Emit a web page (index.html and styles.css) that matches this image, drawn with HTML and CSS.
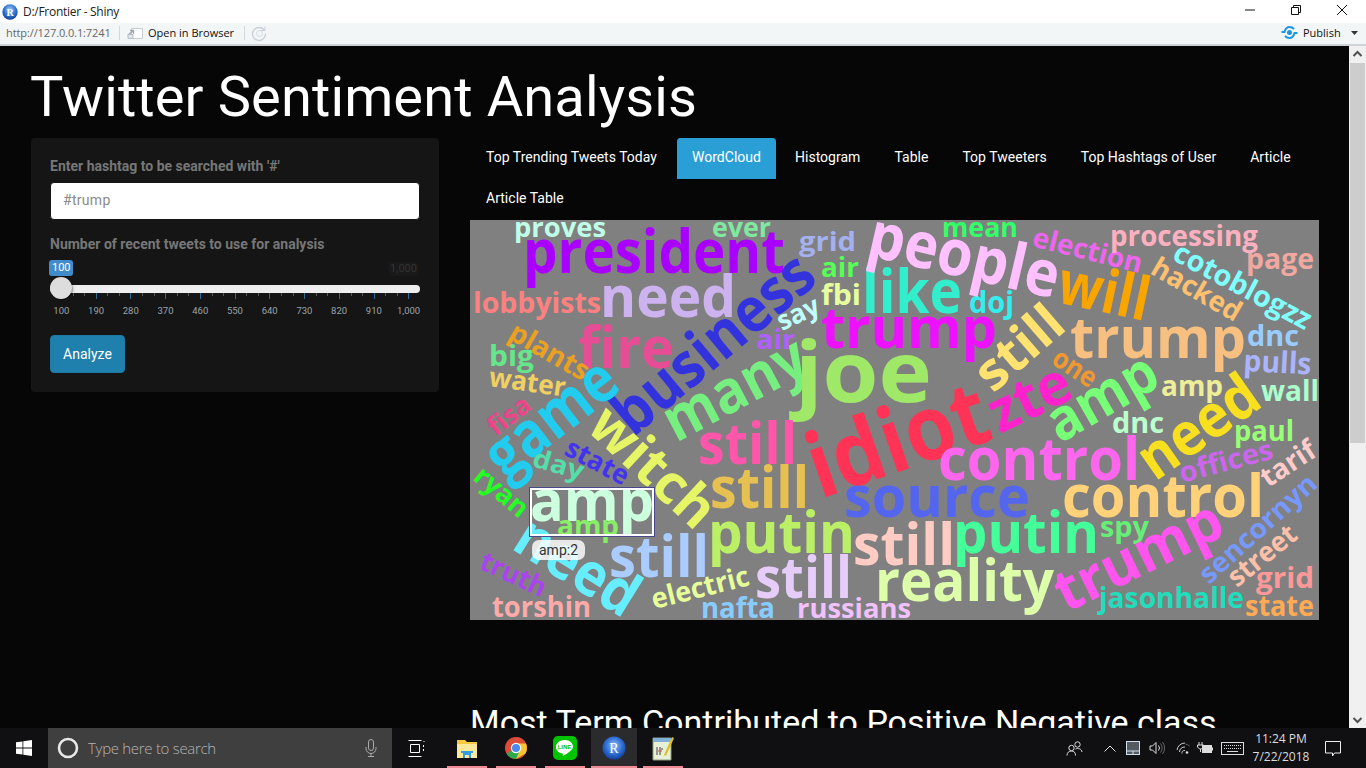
FILE: index.html
```html
<!DOCTYPE html>
<html lang="en">
<head>
<meta charset="utf-8">
<title>D:/Frontier - Shiny</title>
<link rel="stylesheet" href="styles.css">
</head>
<body>
<div class="window">
  <header class="titlebar">
    <svg class="r-logo" width="16" height="16" viewBox="0 0 16 16"><defs><radialGradient id="rg" cx="50%" cy="35%" r="65%"><stop offset="0" stop-color="#9cc8f5"/><stop offset="0.6" stop-color="#2f73cf"/><stop offset="1" stop-color="#123f96"/></radialGradient></defs><circle cx="8" cy="8" r="7.7" fill="url(#rg)"/><text x="8" y="11.6" text-anchor="middle" class="r-letter">R</text></svg>
    <span class="title-text">D:/Frontier - Shiny</span>
    <div class="winbtns">
      <span class="winbtn"><svg width="12" height="12" viewBox="0 0 12 12"><path d="M1 6h10" stroke="#111" fill="none"/></svg></span>
      <span class="winbtn"><svg width="12" height="12" viewBox="0 0 12 12"><path d="M1.5 3.5h7v7h-7zM3.5 3.5v-2h7v7h-2" stroke="#111" fill="none"/></svg></span>
      <span class="winbtn"><svg width="12" height="12" viewBox="0 0 12 12"><path d="M1 1l10 10M11 1L1 11" stroke="#111" fill="none"/></svg></span>
    </div>
  </header>
  <div class="toolbar">
    <span class="url">http://127.0.0.1:7241</span>
    <span class="sep"></span>
    <svg class="open-ico" width="16" height="12" viewBox="0 0 16 12"><path d="M4.500 1.500h11v10h-11z" fill="#fff" stroke="#c5ccd2"/><path d="M1 8l5-4M3 3.500h3.500V7" stroke="#9aa6b0" fill="none" stroke-width="1.300"/><path d="M1 7.500h5v4H1z" fill="#dfe5ea" stroke="#b5bec6"/></svg>
    <span class="open-text">Open in Browser</span>
    <span class="sep"></span>
    <svg class="reload-ico" width="16" height="16" viewBox="0 0 16 16"><path d="M13.500 5.500A6.500 6.500 0 1 0 14.500 8.500" stroke="#c6d0d8" stroke-width="1.300" fill="none"/><path d="M8.500 5.500h5.500V1.500" stroke="#c6d0d8" fill="none"/><circle cx="8.500" cy="8.500" r="3" stroke="#d5dde3" fill="none"/></svg>
    <span class="spacer"></span>
    <svg class="pub-ico" width="17" height="13" viewBox="0 0 17 13"><path d="M0.500 6h3c1-4 3-5 5-5s3.500 0.800 4.500 2" stroke="#1d97e4" stroke-width="2" fill="none"/><path d="M16.500 7h-3c-1 4-3 5-5 5s-3.500-0.800-4.500-2" stroke="#1d97e4" stroke-width="2" fill="none"/><circle cx="8.500" cy="6.500" r="2.500" fill="#1d97e4"/></svg>
    <span class="pub-text">Publish</span>
    <svg class="pub-caret" width="7" height="4" viewBox="0 0 7 4"><path d="M0 0h7L3.500 4z" fill="#333"/></svg>
  </div>
  <div class="viewport">
    <main class="page">
      <h1 class="page-title">Twitter Sentiment Analysis</h1>
      <div class="columns">
        <aside class="sidebar">
          <label class="field-label">Enter hashtag to be searched with '#'</label>
          <input class="text-input" type="text" placeholder="#trump">
          <label class="field-label">Number of recent tweets to use for analysis</label>
          <div class="slider">
            <div class="bubbles"><span class="bubble-from">100</span><span class="bubble-max">1,000</span></div>
            <div class="track"><span class="thumb"></span></div>
            <div class="ticks"></div>
            <div class="tick-labels"><span>100</span><span>190</span><span>280</span><span>370</span><span>460</span><span>550</span><span>640</span><span>730</span><span>820</span><span>910</span><span>1,000</span></div>
          </div>
          <button class="analyze" type="button">Analyze</button>
        </aside>
        <section class="results">
          <ul class="tabs">
            <li class="tab tab-first">Top Trending Tweets Today</li>
            <li class="tab tab-active">WordCloud</li>
            <li class="tab">Histogram</li>
            <li class="tab">Table</li>
            <li class="tab">Top Tweeters</li>
            <li class="tab">Top Hashtags of User</li>
            <li class="tab">Article</li>
            <li class="tab">Article Table</li>
          </ul>
          <div class="cloud-wrap">
            <svg class="cloud" width="849" height="400" viewBox="470 219 849 400">
              <rect x="470" y="219" width="849" height="400" fill="#808080"/>
              <text x="514" y="236" font-size="26" textLength="92" lengthAdjust="spacingAndGlyphs" fill="#bfffe8">proves</text>
              <text x="712" y="236" font-size="26" textLength="59" lengthAdjust="spacingAndGlyphs" fill="#80e8a0">ever</text>
              <text x="523" y="272" font-size="60" textLength="262" lengthAdjust="spacingAndGlyphs" fill="#aa00ff">president</text>
              <text x="799" y="250" font-size="27" textLength="57" lengthAdjust="spacingAndGlyphs" fill="#a5b0ee">grid</text>
              <text x="821" y="276" font-size="26" textLength="38" lengthAdjust="spacingAndGlyphs" fill="#55ff55">air</text>
              <text x="821" y="304" font-size="29" textLength="40" lengthAdjust="spacingAndGlyphs" fill="#e8ffa0">fbi</text>
              <text x="473" y="312" font-size="28" textLength="128" lengthAdjust="spacingAndGlyphs" fill="#ff8080">lobbyists</text>
              <text x="600" y="316" font-size="58" textLength="136" lengthAdjust="spacingAndGlyphs" fill="#ccb3f0">need</text>
              <text x="578" y="367" font-size="58" textLength="96" lengthAdjust="spacingAndGlyphs" fill="#e64d95">fire</text>
              <text x="489" y="365" font-size="29" textLength="45" lengthAdjust="spacingAndGlyphs" fill="#66e68a">big</text>
              <text x="488" y="385" font-size="27" textLength="77" lengthAdjust="spacingAndGlyphs" fill="#f0d060" transform="rotate(8 488 385)">water</text>
              <text x="507" y="337" font-size="28" textLength="87" lengthAdjust="spacingAndGlyphs" fill="#eba020" transform="rotate(30 507 337)">plants</text>
              <text x="633" y="437" font-size="62" textLength="244" lengthAdjust="spacingAndGlyphs" fill="#3333dd" transform="rotate(-40 633 437)">business</text>
              <text x="782" y="330" font-size="27" textLength="44" lengthAdjust="spacingAndGlyphs" fill="#bfffff" transform="rotate(-25 782 330)">say</text>
              <text x="756" y="348" font-size="26" textLength="39" lengthAdjust="spacingAndGlyphs" fill="#b060ff">air</text>
              <text x="676" y="442" font-size="60" textLength="154" lengthAdjust="spacingAndGlyphs" fill="#77ee80" transform="rotate(-28 676 442)">many</text>
              <text x="795" y="401" font-size="85" textLength="137" lengthAdjust="spacingAndGlyphs" fill="#a0e868">joe</text>
              <text x="821" y="347" font-size="57" textLength="176" lengthAdjust="spacingAndGlyphs" fill="#ee11ff">trump</text>
              <text x="862" y="312" font-size="60" textLength="100" lengthAdjust="spacingAndGlyphs" fill="#33eecc">like</text>
              <text x="969" y="312" font-size="30" textLength="45" lengthAdjust="spacingAndGlyphs" fill="#33eeee">doj</text>
              <text x="865" y="254" font-size="64" textLength="194" lengthAdjust="spacingAndGlyphs" fill="#ffc0ff" transform="rotate(13 865 254)">people</text>
              <text x="942" y="236" font-size="27" textLength="76" lengthAdjust="spacingAndGlyphs" fill="#33ff66">mean</text>
              <text x="1031" y="245" font-size="28" textLength="112" lengthAdjust="spacingAndGlyphs" fill="#ee66ee" transform="rotate(14 1031 245)">election</text>
              <text x="1110" y="245" font-size="28" textLength="148" lengthAdjust="spacingAndGlyphs" fill="#ffb0c0">processing</text>
              <text x="1246" y="268" font-size="28" textLength="68" lengthAdjust="spacingAndGlyphs" fill="#f0a8a0">page</text>
              <text x="1171" y="258" font-size="29" textLength="152" lengthAdjust="spacingAndGlyphs" fill="#80ffff" transform="rotate(28 1171 258)">cotoblogzz</text>
              <text x="1149" y="272" font-size="28" textLength="99" lengthAdjust="spacingAndGlyphs" fill="#ffc070" transform="rotate(30 1149 272)">hacked</text>
              <text x="1055" y="301" font-size="60" textLength="92" lengthAdjust="spacingAndGlyphs" fill="#f8a500" transform="rotate(12 1055 301)">will</text>
              <text x="1070" y="357" font-size="58" textLength="176" lengthAdjust="spacingAndGlyphs" fill="#f8c080">trump</text>
              <text x="1247" y="345" font-size="28" textLength="52" lengthAdjust="spacingAndGlyphs" fill="#99ccff">dnc</text>
              <text x="1243" y="370" font-size="30" textLength="68" lengthAdjust="spacingAndGlyphs" fill="#aab4ff" transform="rotate(3 1243 370)">pulls</text>
              <text x="1050" y="362" font-size="28" textLength="47" lengthAdjust="spacingAndGlyphs" fill="#f09830" transform="rotate(33 1050 362)">one</text>
              <text x="820" y="498" font-size="90" textLength="186" lengthAdjust="spacingAndGlyphs" fill="#ff3355" transform="rotate(-19 820 498)">idiot</text>
              <text x="993" y="393" font-size="52" textLength="100" lengthAdjust="spacingAndGlyphs" fill="#ffe270" transform="rotate(-41 993 393)">still</text>
              <text x="1000" y="433" font-size="58" textLength="85" lengthAdjust="spacingAndGlyphs" fill="#ff22cc" transform="rotate(-26 1000 433)">zte</text>
              <text x="1060" y="443" font-size="58" textLength="119" lengthAdjust="spacingAndGlyphs" fill="#77ff77" transform="rotate(-30 1060 443)">amp</text>
              <text x="1161" y="395" font-size="28" textLength="62" lengthAdjust="spacingAndGlyphs" fill="#eeee99">amp</text>
              <text x="1261" y="400" font-size="28" textLength="58" lengthAdjust="spacingAndGlyphs" fill="#aaffcc">wall</text>
              <text x="1112" y="432" font-size="28" textLength="52" lengthAdjust="spacingAndGlyphs" fill="#bbffcc">dnc</text>
              <text x="1234" y="440" font-size="28" textLength="60" lengthAdjust="spacingAndGlyphs" fill="#99ff77">paul</text>
              <text x="1155" y="481" font-size="60" textLength="134" lengthAdjust="spacingAndGlyphs" fill="#f8e020" transform="rotate(-35 1155 481)">need</text>
              <text x="1182" y="482" font-size="28" textLength="96" lengthAdjust="spacingAndGlyphs" fill="#cc66ee" transform="rotate(-15 1182 482)">offices</text>
              <text x="1268" y="487" font-size="28" textLength="60" lengthAdjust="spacingAndGlyphs" fill="#ffcccc" transform="rotate(-33 1268 487)">tarif</text>
              <text x="938" y="479" font-size="59" textLength="202" lengthAdjust="spacingAndGlyphs" fill="#ff66ee">control</text>
              <text x="1062" y="516" font-size="59" textLength="202" lengthAdjust="spacingAndGlyphs" fill="#ffd27a">control</text>
              <text x="844" y="516" font-size="58" textLength="186" lengthAdjust="spacingAndGlyphs" fill="#5566ee">source</text>
              <text x="953" y="552" font-size="58" textLength="146" lengthAdjust="spacingAndGlyphs" fill="#44ff99">putin</text>
              <text x="1100" y="536" font-size="28" textLength="49" lengthAdjust="spacingAndGlyphs" fill="#66ee77">spy</text>
              <text x="1066" y="612" font-size="58" textLength="180" lengthAdjust="spacingAndGlyphs" fill="#ff55ee" transform="rotate(-26 1066 612)">trump</text>
              <text x="1209" y="584" font-size="27" textLength="148" lengthAdjust="spacingAndGlyphs" fill="#7799ff" transform="rotate(-42 1209 584)">sencornyn</text>
              <text x="1237" y="587" font-size="28" textLength="80" lengthAdjust="spacingAndGlyphs" fill="#ffc0aa" transform="rotate(-39 1237 587)">street</text>
              <text x="1256" y="587" font-size="28" textLength="58" lengthAdjust="spacingAndGlyphs" fill="#ff9999">grid</text>
              <text x="1245" y="615" font-size="28" textLength="69" lengthAdjust="spacingAndGlyphs" fill="#ffaa55">state</text>
              <text x="1099" y="607" font-size="28" textLength="145" lengthAdjust="spacingAndGlyphs" fill="#22ddbb">jasonhalle</text>
              <text x="875" y="600" font-size="58" textLength="179" lengthAdjust="spacingAndGlyphs" fill="#ddffaa">reality</text>
              <text x="853" y="564" font-size="58" textLength="102" lengthAdjust="spacingAndGlyphs" fill="#ffccc4">still</text>
              <text x="755" y="597" font-size="58" textLength="97" lengthAdjust="spacingAndGlyphs" fill="#e6ccf8">still</text>
              <text x="708" y="552" font-size="58" textLength="147" lengthAdjust="spacingAndGlyphs" fill="#bbf066">putin</text>
              <text x="710" y="507" font-size="58" textLength="99" lengthAdjust="spacingAndGlyphs" fill="#e6c050">still</text>
              <text x="698" y="463" font-size="58" textLength="99" lengthAdjust="spacingAndGlyphs" fill="#ff55aa">still</text>
              <text x="585" y="428" font-size="55" textLength="151" lengthAdjust="spacingAndGlyphs" fill="#e6f566" transform="rotate(43 585 428)">witch</text>
              <text x="505" y="480" font-size="64" textLength="150" lengthAdjust="spacingAndGlyphs" fill="#22ccee" transform="rotate(-38 505 480)">game</text>
              <text x="496" y="436" font-size="26" textLength="47" lengthAdjust="spacingAndGlyphs" fill="#ee4488" transform="rotate(-38 496 436)">fisa</text>
              <text x="563" y="453" font-size="27" textLength="68" lengthAdjust="spacingAndGlyphs" fill="#4433ee" transform="rotate(28 563 453)">state</text>
              <text x="531" y="465" font-size="26" textLength="52" lengthAdjust="spacingAndGlyphs" fill="#55ddaa" transform="rotate(16 531 465)">day</text>
              <text x="472" y="478" font-size="27" textLength="62" lengthAdjust="spacingAndGlyphs" fill="#22ff22" transform="rotate(40 472 478)">ryan</text>
              <text x="530" y="520" font-size="58" textLength="124" lengthAdjust="spacingAndGlyphs" fill="#ccffdd">amp</text>
              <text x="557" y="535" font-size="28" textLength="62" lengthAdjust="spacingAndGlyphs" fill="#88ee66">amp</text>
              <text x="510" y="547" font-size="60" textLength="134" lengthAdjust="spacingAndGlyphs" fill="#66eeff" transform="rotate(32 510 547)">need</text>
              <text x="609" y="576" font-size="58" textLength="100" lengthAdjust="spacingAndGlyphs" fill="#aaccff">still</text>
              <text x="478" y="567" font-size="27" textLength="70" lengthAdjust="spacingAndGlyphs" fill="#aa44ee" transform="rotate(25 478 567)">truth</text>
              <text x="492" y="616" font-size="28" textLength="99" lengthAdjust="spacingAndGlyphs" fill="#ffaaaa">torshin</text>
              <text x="654" y="608" font-size="28" textLength="100" lengthAdjust="spacingAndGlyphs" fill="#e6ff99" transform="rotate(-14 654 608)">electric</text>
              <text x="701" y="617" font-size="28" textLength="74" lengthAdjust="spacingAndGlyphs" fill="#88ccff">nafta</text>
              <text x="797" y="617" font-size="26" textLength="114" lengthAdjust="spacingAndGlyphs" fill="#f0c0ff">russians</text>
              <rect x="530.500" y="487.500" width="123" height="47" fill="none" stroke="#4a4a8a" stroke-width="3"/>
              <rect x="531" y="488" width="122" height="46" fill="none" stroke="#fff" stroke-width="2"/>
            </svg>
            <span class="cloud-tip">amp:2</span>
          </div>
          <h3 class="sub-title">Most Term Contributed to Positive Negative class</h3>
        </section>
      </div>
    </main>
    <div class="scrollbar">
      <svg class="sb-arrow" width="17" height="17" viewBox="0 0 17 17"><path d="M4.500 10l4-4 4 4" stroke="#505050" stroke-width="2" fill="none"/></svg>
      <span class="sb-thumb"></span>
      <span class="spacer"></span>
      <svg class="sb-arrow" width="17" height="17" viewBox="0 0 17 17"><path d="M4.500 7l4 4 4-4" stroke="#505050" stroke-width="2" fill="none"/></svg>
    </div>
  </div>
  <footer class="taskbar">
    <span class="start"><svg width="16" height="16" viewBox="0 0 16 16"><path d="M0 2.300l6.500-.9v6.200H0zM7.300 1.300L16 0v7.600H7.300zM0 8.400h6.500v6.200L0 13.700zM7.300 8.400H16V16l-8.700-1.200z" fill="#fff"/></svg></span>
    <div class="searchbox">
      <svg class="cortana" width="22" height="22" viewBox="0 0 22 22"><circle cx="11" cy="11" r="9" fill="none" stroke="#e8e8e8" stroke-width="2.600"/></svg>
      <span class="search-text">Type here to search</span>
      <svg class="mic" width="12" height="18" viewBox="0 0 12 18"><rect x="3.500" y="0.500" width="5" height="11" rx="2.500" fill="none" stroke="#aaa"/><path d="M1 8v1.500a5 5 0 0 0 10 0V8M6 14.500v3M3 17.500h6" fill="none" stroke="#aaa"/></svg>
    </div>
    <span class="taskview"><svg width="17" height="17" viewBox="0 0 17 17"><path d="M0.500 0.500h13M0.500 16.500h13M2.500 4.500h9v8h-9zM15.500 5v2M15.500 9v2M16 1v1" stroke="#fff" fill="none"/></svg></span>
    <div class="apps">
      <span class="app"><svg width="24" height="24" viewBox="0 0 24 24"><path d="M2 4h8l2 2h10v16H2z" fill="#f5c93d"/><path d="M2 8h20v14H2z" fill="#ffe89a"/><path d="M8 15h8v7h-2v-3h-4v3H8z" fill="#2f9fe0"/><path d="M6 15h12v2H6z" fill="#2f9fe0"/></svg></span>
      <span class="app"><svg width="24" height="24" viewBox="0 0 24 24"><circle cx="12" cy="12" r="11" fill="#dd4b39"/><path d="M12 12L2.500 17.500A11 11 0 0 0 12 23l5.500-8z" fill="#2fa84f"/><path d="M12 1a11 11 0 0 1 9.500 16.500L12 23l5-11-5-4.500h10A11 11 0 0 0 12 1z" fill="#f7c52d"/><circle cx="12" cy="12" r="5.200" fill="#fff"/><circle cx="12" cy="12" r="4" fill="#4a89f0"/></svg></span>
      <span class="app"><svg width="24" height="24" viewBox="0 0 24 24"><rect width="24" height="24" rx="5" fill="#00c300"/><path d="M12 4C6.500 4 3 7 3 11c0 3.500 3 6 6.500 6.500.6.200.4 1 .3 1.800 0 .6.500.6 1 .3 2-1.100 4-2.600 6-4.100 2-1.600 3.200-3 3.200-4.500C20 7 17 4 12 4z" fill="#fff"/><text x="11.500" y="13.200" text-anchor="middle" class="line-letters">LINE</text></svg></span>
      <span class="app app-active"><svg width="24" height="24" viewBox="0 0 24 24"><defs><radialGradient id="rg2" cx="50%" cy="40%" r="60%"><stop offset="0" stop-color="#8fc0f5"/><stop offset="0.6" stop-color="#2f6fd5"/><stop offset="1" stop-color="#12409a"/></radialGradient></defs><circle cx="12" cy="12" r="11.500" fill="url(#rg2)"/><text x="12" y="17" text-anchor="middle" class="r-letter-big">R</text></svg></span>
      <span class="app"><svg width="24" height="26" viewBox="0 0 24 26"><path d="M2 3h18v22H2z" fill="#e8f0d8" stroke="#8a9a80"/><path d="M2 3h18v4H2z" fill="#7fb0d8"/><path d="M6 12v8M9 12v8M12 14h-2" stroke="#444" fill="none"/><path d="M13 20l8-18 2 1-8 18z" fill="#e0c020"/><path d="M7 16h4" stroke="#c55"/></svg></span>
    </div>
    <span class="spacer"></span>
    <div class="tray">
      <svg class="t-people" width="17" height="15" viewBox="0 0 17 15"><circle cx="5.500" cy="7" r="2.700" fill="none" stroke="#ddd"/><circle cx="11.500" cy="3.500" r="2.700" fill="none" stroke="#ddd"/><path d="M1 14.500c0-3 2-4.500 4.500-4.500s4 1.500 4 4.500M9.500 8c2.500-1 6-.500 6.500 3" fill="none" stroke="#ddd"/></svg>
      <svg class="t-caret" width="12" height="7" viewBox="0 0 12 7"><path d="M0.500 6.500L6 1l5.500 5.500" stroke="#e0e0e0" fill="none"/></svg>
      <svg class="t-pad" width="14" height="14" viewBox="0 0 14 14"><rect x="0.500" y="0.500" width="13" height="13" fill="#555a60" stroke="#cfe0ef"/><path d="M1 10h12M7 10v3" stroke="#cfe0ef"/></svg>
      <svg class="t-speaker" width="16" height="14" viewBox="0 0 16 14"><path d="M1 5h2.500L7 1.500v11L3.500 9H1z" fill="none" stroke="#ddd"/><path d="M9.500 4.500a4 4 0 0 1 0 5" stroke="#ddd" fill="none"/><path d="M11.500 2.500a7 7 0 0 1 0 9M13.500 1a9.500 9.500 0 0 1 0 12" stroke="#666" fill="none"/></svg>
      <svg class="t-wifi" width="15" height="14" viewBox="0 0 15 14"><path d="M1 9a8 8 0 0 1 8-7M3.500 11a5 5 0 0 1 5.500-5M6 12.500a2.500 2.500 0 0 1 3-3" stroke="#ccc" fill="none"/><path d="M9.500 3a10 10 0 0 1 4 2" stroke="#666" fill="none"/><circle cx="11" cy="11.500" r="1.300" fill="#ddd"/></svg>
      <svg class="t-batt" width="16" height="12" viewBox="0 0 16 12"><rect x="5.500" y="3.500" width="9" height="7" fill="#ddd" stroke="#ddd"/><rect x="15" y="5.500" width="1" height="3" fill="#ddd"/><path d="M2 0v3M5 0v3M0.500 3h6v2l-2 2H2.500L0.500 5zM3.500 7v3" stroke="#ddd" fill="none"/></svg>
      <svg class="t-kbd" width="23" height="13" viewBox="0 0 23 13"><rect x="0.500" y="0.500" width="22" height="12" fill="none" stroke="#ddd"/><path d="M3 3.500h17M3 6.500h17" stroke="#ddd" stroke-dasharray="1 1"/><path d="M6 9.500h11" stroke="#ddd"/></svg>
      <div class="clock"><span>11:24 PM</span><span>7/22/2018</span></div>
      <svg class="t-notif" width="16" height="16" viewBox="0 0 16 16"><path d="M0.500 0.500h15v11.500H9.500L7.500 15V12H0.500z" fill="none" stroke="#eee"/></svg>
    </div>
  </footer>
</div>
</body>
</html>
```
FILE: styles.css
```css
* { box-sizing: border-box; }
html, body { margin: 0; padding: 0; height: 768px; overflow: hidden; background: #060606; }
body { font-family: Roboto, "Liberation Sans", sans-serif; }
.window { display: flex; flex-direction: column; width: 1366px; height: 768px; }
.spacer { flex: 1; }

.titlebar { display: flex; align-items: center; height: 23px; background: #fff; padding-left: 2px; flex: none; }
.r-letter { font: 700 10px "Liberation Serif", serif; fill: #fff; }
.r-letter-big { font: 400 14px "Liberation Serif", serif; fill: #fff; }
.line-letters { font: 700 6px "Liberation Sans", sans-serif; fill: #00c300; }
.title-text { margin-left: 5px; font: 12px "Open Sans", sans-serif; letter-spacing: -0.28px; color: #222; }
.winbtns { display: flex; margin-left: auto; margin-right: 1px; margin-top: -3px; }
.winbtn { display: flex; align-items: center; justify-content: center; width: 46px; height: 23px; }

.toolbar { display: flex; align-items: center; height: 23px; background: #f3f6f7; border-bottom: 2px solid #cfd2d4; flex: none; padding: 0 0 2px 6px; font: 11px "Open Sans", sans-serif; }
.url { color: #666; width: 113px; white-space: nowrap; letter-spacing: -0.1px; }
.sep { width: 1px; height: 14px; background: #d4d8db; }
.open-ico { margin-left: 7px; }
.open-text { margin-left: 5px; width: 96px; color: #111; white-space: nowrap; }
.reload-ico { margin-left: 6px; }
.pub-text { margin-left: 5px; color: #111; width: 48px; white-space: nowrap; }
.pub-caret { margin-right: 8px; }

.viewport { flex: 1; display: flex; min-height: 0; overflow: hidden; background: #060606; }
.page { flex: 1; min-width: 0; padding: 20px 0 0 31px; overflow: hidden; color: #fff; }
.page-title { margin: 0 0 10px -1px; font-size: 56px; line-height: 62px; font-weight: 400; letter-spacing: 0.12px; color: #fff; white-space: nowrap; }
.columns { display: flex; gap: 31px; align-items: flex-start; }

.sidebar { width: 408px; flex: none; background: #151515; border-radius: 4px; padding: 19px; display: flex; flex-direction: column; align-items: flex-start; }
.field-label { font-size: 14px; line-height: 20px; font-weight: 700; color: #777; margin: -1px 0 6px; }
.text-input { width: 370px; height: 38px; border: 1px solid #151515; border-radius: 4px; padding: 4px 12px 6px; background: #fff; font: 14px Roboto, sans-serif; letter-spacing: 0.3px; margin-bottom: 15px; outline: none; }
.text-input::placeholder { color: #8a8a8a; opacity: 1; }

.slider { width: 370px; margin-bottom: 18px; }
.bubbles { display: flex; justify-content: space-between; height: 16px; }
.bubble-from { background: #428bca; color: #fff; font-size: 11px; line-height: 16px; padding: 0 3px; border-radius: 3px; margin-left: -1px; width: 24px; text-align: center; }
.bubble-max { background: rgba(255,255,255,.02); color: #333; font-size: 11px; line-height: 14px; height: 14px; margin: 2px 2px 0 0; padding: 0 1px; border-radius: 3px; }
.track { position: relative; height: 8px; margin-top: 9px; background: #eee; border-radius: 4px; }
.thumb { position: absolute; left: 0; top: -8px; width: 22px; height: 22px; border-radius: 50%; background: #ddd; box-shadow: 1px 1px 2px rgba(0,0,0,.4); }
.ticks { height: 6px; margin-left: 11px; background-image: repeating-linear-gradient(90deg, #2a6a9a 0 1px, transparent 1px 34.73px), repeating-linear-gradient(90deg, #555 0 1px, transparent 1px 11.58px); background-size: 100% 6px, 100% 3px; background-repeat: no-repeat; }
.tick-labels { display: grid; grid-template-columns: repeat(11, 34.73px); margin: 6px 0 0 -6px; font-size: 9.500px; line-height: 12px; color: #9aa4ab; text-align: center; }

.analyze { width: 75px; height: 38px; background: #1f80ad; border: 1px solid #1c7aa5; border-radius: 4px; color: #fff; font: 14px Roboto, sans-serif; padding: 0; }

.results { width: 849px; flex: none; }
.tabs { display: flex; flex-wrap: wrap; list-style: none; margin: 0; padding: 0; }
.tab { padding: 9px 15px 12px; margin-right: 2px; height: 41px; border: solid transparent; border-width: 0 1px; font-size: 14px; line-height: 20px; letter-spacing: 0.02px; color: #fff; white-space: nowrap; }
.tab-first { padding-right: 16px; }
.tab-active { background: #2a9fd6; background-clip: padding-box; border-radius: 4px 4px 0 0; }
.cloud-wrap { position: relative; height: 400px; }
.cloud { display: block; }
.cloud text { font-family: "Open Sans", "Noto Sans", sans-serif; font-weight: 700; }
.cloud-tip { position: absolute; left: 62px; top: 320px; width: 53px; height: 20px; border-radius: 7px; background: rgba(255,255,255,.82); color: #333; font-size: 14px; line-height: 20px; text-align: center; }
.sub-title { margin: 84px 0 0; font-size: 34px; line-height: 37px; font-weight: 400; color: #fff; white-space: nowrap; }

.scrollbar { width: 17px; flex: none; background: #f0f0f0; display: flex; flex-direction: column; align-items: center; }
.sb-arrow { flex: none; }
.sb-thumb { width: 15px; height: 380px; background: #cdcdcd; }

.taskbar { display: flex; align-items: center; height: 40px; flex: none; background: #101012; position: relative; }
.start { display: flex; align-items: center; justify-content: center; width: 48px; height: 40px; }
.searchbox { display: flex; align-items: center; width: 344px; height: 40px; background: #3f3f3f; padding-left: 9px; }
.search-text { margin-left: 9px; font: 300 15px "Open Sans", sans-serif; letter-spacing: -0.3px; color: #b5b5b5; white-space: nowrap; }
.mic { margin-left: auto; margin-right: 15px; }
.taskview { display: flex; align-items: center; justify-content: center; margin-left: 16px; width: 17px; height: 40px; }
.apps { display: flex; margin-left: 22px; gap: 9px; }
.app { display: flex; align-items: center; justify-content: center; width: 40px; height: 40px; border-bottom: 2px solid #f08a94; padding-top: 2px; }
.app-active { width: 46px; margin: 0 -3px; background: #2b2b2d; }
.tray { display: flex; align-items: center; height: 40px; position: relative; color: #ddd; }
.t-people { margin-right: 21px; }
.t-caret { margin-right: 10px; }
.t-pad { margin-right: 9px; }
.t-speaker { margin-right: 11px; }
.t-wifi { margin-right: 6px; }
.t-batt { margin-right: 8px; }
.t-kbd { margin-right: 0; }
.clock { display: flex; flex-direction: column; align-items: center; width: 74px; font: 12px/18px "Open Sans", sans-serif; color: #ddd; }
.t-notif { margin: 2px 25px 0 7px; }
```
